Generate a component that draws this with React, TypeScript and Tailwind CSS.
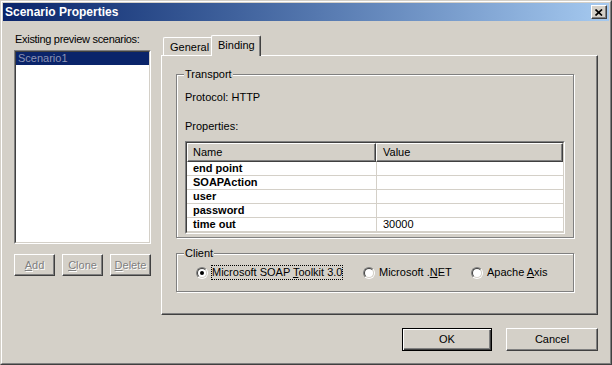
import type { ReactNode } from "react";

const raised =
  "border border-t-white border-l-white border-r-[#404040] border-b-[#404040] shadow-[inset_-1px_-1px_0_#808080]";

function PushButton({
  children,
  className = "",
  disabled,
  isDefault,
}: {
  children: ReactNode;
  className?: string;
  disabled?: boolean;
  isDefault?: boolean;
}) {
  const frame = isDefault
    ? "border border-black shadow-[inset_1px_1px_0_#fff,inset_-1px_-1px_0_#404040,inset_-2px_-2px_0_#808080]"
    : raised;
  const text = disabled ? "text-[#808080] [text-shadow:1px_1px_0_#fff]" : "text-black";
  return (
    <div className={`flex h-full items-center justify-center bg-[#d4d0c8] text-[11px] leading-[13px] ${frame} ${text} ${className}`}>
      {children}
    </div>
  );
}

function Radio({ checked }: { checked?: boolean }) {
  return (
    <span className="relative block h-[12px] w-[12px] shrink-0 rounded-full border border-t-[#808080] border-l-[#808080] border-r-white border-b-white">
      <span className="absolute inset-0 rounded-full border border-t-[#404040] border-l-[#404040] border-r-[#d4d0c8] border-b-[#d4d0c8] bg-white">
        {checked && <span className="absolute left-[2px] top-[2px] h-[4px] w-[4px] rounded-full bg-black" />}
      </span>
    </span>
  );
}

function Group({ label, className = "", children }: { label: string; className?: string; children: ReactNode }) {
  return (
    <div className={`relative w-[398px] border border-[#808080] shadow-[inset_1px_1px_0_#fff,1px_1px_0_#fff] ${className}`}>
      <span className="absolute left-[7px] top-[-7px] bg-[#d4d0c8] px-[1px] leading-[13px]">{label}</span>
      {children}
    </div>
  );
}

const rows = [
  { name: "end point", value: "" },
  { name: "SOAPAction", value: "" },
  { name: "user", value: "" },
  { name: "password", value: "" },
  { name: "time out", value: "30000" },
];

export default function App() {
  return (
    <div className="h-[365px] w-[612px] border border-t-[#d4d0c8] border-l-[#d4d0c8] border-r-[#404040] border-b-[#404040] bg-[#d4d0c8] font-['Liberation_Sans',Arial,sans-serif] text-[11px] text-black">
      <div className="h-full w-full border border-t-white border-l-white border-r-[#808080] border-b-[#808080] p-px">
        {/* title bar */}
        <div className="flex h-[18px] bg-linear-to-r from-[#0a246a] to-[#a6caf0]">
          <span className="pl-[2px] text-[12px] font-bold leading-[18px] text-white">Scenario Properties</span>
          <div className={`ml-auto mr-[2px] mt-[2px] flex h-[14px] w-[16px] items-center justify-center bg-[#d4d0c8] ${raised}`}>
            <svg width="8" height="7" viewBox="0 0 8 7">
              <path d="M0.5 0.5 L7 6.5 M7 0.5 L0.5 6.5" stroke="#000" strokeWidth="1.7" fill="none" />
            </svg>
          </div>
        </div>

        {/* body */}
        <div className="flex pl-[11px] pt-[12px]">
          {/* left column */}
          <div className="flex w-[137px] flex-col">
            <div className="h-[17px] pl-px leading-[13px] tracking-[-0.3px]">Existing preview scenarios:</div>
            <div className="h-[194px] border border-t-[#808080] border-l-[#808080] border-r-white border-b-white">
              <div className="h-full border border-t-[#404040] border-l-[#404040] border-r-[#d4d0c8] border-b-[#d4d0c8] bg-white">
                <div className="h-[13px] bg-[#0a246a] pl-[2px] leading-[13px] text-[#8d93b5]">Scenario1</div>
              </div>
            </div>
            <div className="mt-[10px] flex h-[22px] gap-[7px]">
              <PushButton disabled className="w-[41px]">
                <u>A</u>dd
              </PushButton>
              <PushButton disabled className="w-[41px]">
                <u>C</u>lone
              </PushButton>
              <PushButton disabled className="w-[41px]">
                <u>D</u>elete
              </PushButton>
            </div>
          </div>

          {/* right column */}
          <div className="ml-[10px] mt-[2px] flex w-[437px] flex-col">
            <div className="flex h-[20px] items-end">
              <div className="ml-[2px] h-[18px] w-[48px] rounded-tl-[2px] border-l border-t border-l-white border-t-white pl-[6px] pt-[3px] leading-[13px]">
                General
              </div>
              <div className="relative z-10 -mb-px h-[21px] w-[50px] rounded-t-[2px] border-l border-r border-t border-l-white border-t-white border-r-[#404040] bg-[#d4d0c8] pl-[6px] pt-[3px] leading-[13px] shadow-[inset_-1px_0_0_#808080]">
                Binding
              </div>
            </div>

            <div className={`h-[260px] pl-[14px] pt-[18px] ${raised}`}>
              <Group label="Transport" className="h-[164px]">
                <div className="pl-[8px]">
                  <div className="mt-[16px] leading-[13px]">Protocol: HTTP</div>
                  <div className="mt-[16px] leading-[13px]">Properties:</div>
                  <div className="mt-[8px] w-[380px] border border-t-[#808080] border-l-[#808080] border-r-white border-b-white">
                    <div className="border border-t-[#404040] border-l-[#404040] border-r-[#d4d0c8] border-b-[#d4d0c8] bg-white">
                      <div className="flex h-[19px] bg-[#d4d0c8]">
                        <div className={`h-full w-[189px] pl-[5px] pt-[2px] leading-[13px] ${raised}`}>Name</div>
                        <div className={`h-full flex-1 pl-[6px] pt-[2px] leading-[13px] ${raised}`}>Value</div>
                      </div>
                      {rows.map((r) => (
                        <div key={r.name} className="flex h-[14px] border-b border-b-[#d4d0c8]">
                          <div className="w-[189px] pl-[6px] font-bold leading-[13px]">{r.name}</div>
                          <div className="flex-1 border-l border-l-[#d4d0c8] pl-[6px] leading-[13px]">{r.value}</div>
                        </div>
                      ))}
                    </div>
                  </div>
                </div>
              </Group>

              <Group label="Client" className="mt-[15px] h-[39px]">
                <div className="ml-[19px] mt-[11px] flex h-[15px] items-center">
                  <div className="flex w-[167px] items-center">
                    <Radio checked />
                    <span className="ml-[3px] h-[15px] border border-dotted border-black leading-[13px]">
                      Microsoft SOAP <u>T</u>oolkit 3.0
                    </span>
                  </div>
                  <div className="flex w-[108px] items-center">
                    <Radio />
                    <span className="ml-[3px] h-[15px] border border-transparent leading-[13px]">
                      Microsoft .<u>N</u>ET
                    </span>
                  </div>
                  <div className="flex items-center">
                    <Radio />
                    <span className="ml-[3px] h-[15px] border border-transparent leading-[13px]">
                      Apache <u>A</u>xis
                    </span>
                  </div>
                </div>
              </Group>
            </div>

            <div className="mt-[13px] flex h-[23px] justify-end gap-[14px]">
              <PushButton isDefault className="w-[90px]">
                OK
              </PushButton>
              <PushButton className="w-[92px]">Cancel</PushButton>
            </div>
          </div>
        </div>
      </div>
    </div>
  );
}
